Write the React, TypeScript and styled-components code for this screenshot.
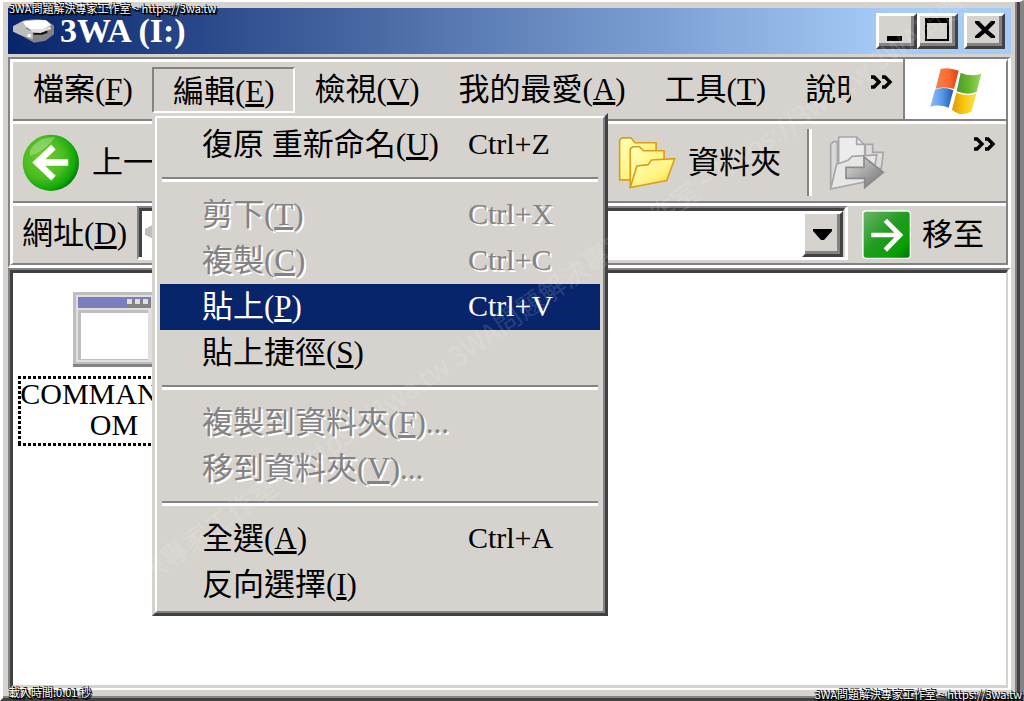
import React from "react";
import styled, { createGlobalStyle, css } from "styled-components";

const face = "#d6d3ce";
const shade = "#848284";
const dark = "#424142";
const navy = "#08246b";
const uiFont = `"Liberation Serif", "Noto Sans CJK TC", serif`;

const GlobalStyle = createGlobalStyle`
  * { box-sizing: border-box; }
  body { margin: 0; background: ${face}; font-family: ${uiFont}; color: #000; }
  button, input { font: inherit; color: inherit; border-radius: 0; margin: 0; }
  ul { list-style: none; margin: 0; padding: 0; }
  svg { display: block; flex: none; }
`;

const raised = css`
  border: solid;
  border-width: 3px;
  border-color: #fff ${dark} ${dark} #fff;
  box-shadow: inset -3px -3px ${shade};
`;

const Window = styled.div`
  position: relative;
  display: flex;
  flex-direction: column;
  min-height: 100vh;
  padding: 6px 9px 8px 5px;
  background: ${face};
  border: solid;
  border-width: 2px 4px 3px 3px;
  border-color: #fff ${shade} ${dark} #fff;
  box-shadow: inset -3px 0 ${dark}, inset -5px -2px ${shade};
`;

const TitleBar = styled.header`
  display: flex;
  align-items: center;
  height: 46px;
  margin-bottom: 3px;
  padding: 0 6px 0 5px;
  background: linear-gradient(90deg, ${navy}, #a5cbf7 88%);
  color: #fff;
`;

const Title = styled.h1`
  flex: 1;
  margin: 0 0 0 6px;
  font-size: 34px;
  line-height: 46px;
  font-weight: 700;
`;

const Caption = styled.button<{ $apart?: boolean }>`
  ${raised}
  display: flex;
  width: 41px;
  height: 36px;
  padding: 0;
  margin-left: ${(p) => (p.$apart ? 6 : 0)}px;
  background: ${face};
`;

const RebarOuter = styled.div`
  border: solid;
  border-width: 2px 3px 3px 2px;
  border-color: ${shade} #fff #fff ${shade};
`;

const RebarInner = styled.div`
  border: solid;
  border-width: 3px 2px 2px 3px;
  border-color: #fff ${shade} ${shade} #fff;
`;

const Band = styled.div<{ $tall?: boolean; $last?: boolean }>`
  display: flex;
  align-items: center;
  height: ${(p) => (p.$tall ? 77 : 57)}px;
  font-size: 31px;
  line-height: 46px;
  white-space: nowrap;
  ${(p) =>
    !p.$last &&
    css`
      box-sizing: content-box;
      border-bottom: 2px solid ${shade};
      box-shadow: 0 3px #fff;
      margin-bottom: 3px;
    `}
`;

const MenuList = styled.ul`
  display: flex;
  flex: 1;
  min-width: 0;
`;

const MenuEntry = styled.li<{ $clip?: boolean }>`
  position: relative;
  ${(p) => p.$clip && css`width: 66px; overflow: hidden;`}
`;

const MenuButton = styled.button<{ $open?: boolean }>`
  height: 46px;
  padding: 0 17px 0 18px;
  border: 2px solid transparent;
  background: none;
  line-height: 42px;
  ${(p) =>
    p.$open &&
    css`
      border-color: ${shade} #fff #fff ${shade};
      padding: 2px 18px 0 19px;
    `}
`;

const More = styled.button`
  align-self: flex-start;
  margin: 12px 10px 0 0;
  padding: 0;
  border: 0;
  background: none;
`;

const Brand = styled.div`
  display: flex;
  align-items: center;
  justify-content: center;
  align-self: stretch;
  width: 103px;
  margin-top: -3px;
  padding-top: 3px;
  border-left: 2px solid ${shade};
  background: #fff;
`;

const PopupOuter = styled.div`
  position: absolute;
  z-index: 5;
  top: 46px;
  left: 0;
  width: 456px;
  border: solid;
  border-width: 3px;
  border-color: ${face} ${dark} ${dark} ${face};
`;

const PopupInner = styled.ul`
  padding: 4px 3px 3px;
  background: ${face};
  border: solid;
  border-width: 2px;
  border-color: #fff ${shade} ${shade} #fff;
`;

const PopupItem = styled.button<{ $active?: boolean }>`
  display: flex;
  width: 100%;
  height: 46px;
  padding: 0 0 0 42px;
  border: 0;
  text-align: left;
  line-height: 46px;
  background: ${(p) => (p.$active ? navy : "transparent")};
  color: ${(p) => (p.$active ? "#fff" : "#000")};
  &:disabled {
    color: ${shade};
    text-shadow: 2px 2px #fff;
  }
`;

const ItemName = styled.span`
  flex: 1;
`;

const Shortcut = styled.span`
  width: 132px;
  font-size: 30px;
  line-height: 44px;
`;

const Rule = styled.li`
  height: 24px;
  padding: 9px 2px 0;
  &::before {
    content: "";
    display: block;
    border-top: 2px solid ${shade};
    border-bottom: 3px solid #fff;
  }
`;

const ToolButton = styled.button<{ $wide?: boolean }>`
  display: flex;
  align-items: center;
  gap: 12px;
  height: 70px;
  padding: 0 0 0 9px;
  border: 0;
  background: none;
  ${(p) => p.$wide && css`width: 596px;`}
`;

const ToolDivider = styled.span`
  width: 5px;
  height: 67px;
  margin: 0 8px 0 26px;
  border-left: 2px solid ${shade};
  border-right: 3px solid #fff;
`;

const Grow = styled.span`
  flex: 1;
`;

const AddressLabel = styled.label`
  padding: 0 10px 2px 9px;
`;

const ComboOuter = styled.div`
  display: flex;
  flex: 1;
  align-self: flex-start;
  height: 54px;
  border: solid;
  border-width: 2px 3px 3px 2px;
  border-color: ${shade} #fff #fff ${shade};
`;

const ComboInner = styled.div`
  display: flex;
  align-items: center;
  flex: 1;
  padding-left: 3px;
  background: #fff;
  border: solid;
  border-width: 3px 2px 0 3px;
  border-color: ${dark} ${face} ${face} ${dark};
`;

const AddressInput = styled.input`
  flex: 1;
  min-width: 0;
  height: 40px;
  padding: 0 8px;
  border: 0;
  outline: 0;
  background: transparent;
`;

const DropButton = styled.button`
  ${raised}
  display: flex;
  align-items: center;
  justify-content: center;
  align-self: stretch;
  width: 41px;
  padding: 0;
  background: ${face};
`;

const GoButton = styled.button`
  display: flex;
  align-items: center;
  gap: 11px;
  height: 57px;
  padding: 0 22px 0 14px;
  border: 0;
  background: none;
`;

const PaneOuter = styled.main`
  display: flex;
  flex: 1;
  border: solid;
  border-width: 2px 3px 2px 2px;
  border-color: ${shade} #fff #fff ${shade};
`;

const PaneInner = styled.div`
  flex: 1;
  padding: 19px 5px;
  background: #fff;
  border: solid;
  border-width: 3px 2px 3px 3px;
  border-color: ${dark} ${face} ${face} ${dark};
`;

const FileTile = styled.figure`
  display: flex;
  flex-direction: column;
  align-items: center;
  width: 192px;
  margin: 0;
`;

const dots = (dir: string) =>
  `repeating-linear-gradient(${dir}, #000 0 3px, transparent 3px 5px)`;

const FileName = styled.figcaption`
  width: 192px;
  margin-top: 9px;
  padding: 2px 0 6px;
  font-size: 30px;
  line-height: 31px;
  text-align: center;
  background: ${dots("90deg")} top / 100% 3px no-repeat,
    ${dots("90deg")} bottom / 100% 3px no-repeat,
    ${dots("180deg")} left / 3px 100% no-repeat,
    ${dots("180deg")} right / 3px 100% no-repeat;
`;

const Stamp = styled.small<{ $corner: "tl" | "bl" | "br" }>`
  position: absolute;
  z-index: 8;
  font-family: "Noto Sans CJK TC", sans-serif;
  font-size: 11px;
  line-height: 14px;
  color: #fff;
  white-space: nowrap;
  text-shadow: 1px 1px #000, -1px 1px #000, 1px -1px #000, 2px 2px #000, 0 1px #000;
  ${(p) => p.$corner === "tl" && css`top: -1px; left: 6px;`}
  ${(p) => p.$corner === "bl" && css`bottom: -1px; left: 6px;`}
  ${(p) => p.$corner === "br" && css`bottom: -3px; right: -2px;`}
`;

const Overlay = styled.div`
  position: absolute;
  inset: 0;
  z-index: 9;
  overflow: hidden;
  pointer-events: none;
`;

const Diagonal = styled.div`
  position: absolute;
  left: 26px;
  top: 637px;
  transform: rotate(-35deg);
  transform-origin: 0 50%;
  font-family: "Noto Sans CJK TC", sans-serif;
  font-size: 27px;
  line-height: 30px;
  color: rgba(255, 255, 255, 0.15);
  white-space: pre;
`;

const Drive = ({ width }: { width: number }) => (
  <svg width={width} viewBox="0 0 124 72" aria-hidden="true">
    <path d="M0 22 30 6Q60-4 100 4L124 20V46L98 66 64 72 20 48 0 38Z" fill="#848284" />
    <path d="M0 22 30 6 44 2 40 30 60 38V62L20 48 0 38Z" fill="#bdbebd" />
    <path d="M30 8Q60 0 100 4L116 18 92 30 50 30 38 22Z" fill="#fff" />
    <path d="M50 30 92 30 112 22 116 30 84 42 60 40Z" fill="#dedfde" />
    <path d="M62 42H84L104 35V42L88 48H62Z" fill="#111" />
    <path d="M44 46h10v8H44Z" fill="#fff" />
  </svg>
);

const Chevrons = () => (
  <svg width="23" height="16" viewBox="0 0 23 16" aria-hidden="true">
    <path d="M1 3H4L9 8 4 13H1M12 3H15L20 8 15 13H12" fill="none" stroke="#000" strokeWidth="3.4" />
  </svg>
);

const Flag = () => (
  <svg width="52" height="48" viewBox="694 197 156 144" aria-hidden="true">
    <defs>
      <linearGradient id="fr"><stop offset="0" stopColor="#f08050" /><stop offset=".55" stopColor="#ff6a2c" /><stop offset="1" stopColor="#d8401c" /></linearGradient>
      <linearGradient id="fg"><stop offset="0" stopColor="#4c9a30" /><stop offset=".5" stopColor="#68b82c" /><stop offset="1" stopColor="#9ad860" /></linearGradient>
      <linearGradient id="fb"><stop offset="0" stopColor="#8cc0f8" /><stop offset=".5" stopColor="#5a98e8" /><stop offset="1" stopColor="#2458a8" /></linearGradient>
      <linearGradient id="fy"><stop offset="0" stopColor="#e09808" /><stop offset=".5" stopColor="#f8c810" /><stop offset="1" stopColor="#fce050" /></linearGradient>
    </defs>
    <path d="M726 203Q750 196 780 208L766 263Q742 254 711 262Z" fill="url(#fr)" />
    <path d="M786 214Q816 228 848 217L834 271Q808 284 774 270Z" fill="url(#fg)" />
    <path d="M709 265Q736 254 764 267L750 319Q724 308 695 316Z" fill="url(#fb)" />
    <path d="M773 274Q802 286 833 277L818 331Q786 348 760 325Z" fill="url(#fy)" />
  </svg>
);

const Back = () => (
  <svg width="58" height="58" viewBox="64 40 177 177" aria-hidden="true">
    <defs>
      <radialGradient id="bk" cx=".38" cy=".42" r=".65">
        <stop offset="0" stopColor="#74cc30" /><stop offset=".55" stopColor="#4cbc20" />
        <stop offset=".85" stopColor="#10a808" /><stop offset="1" stopColor="#087010" />
      </radialGradient>
    </defs>
    <circle cx="152" cy="128" r="86" fill="url(#bk)" />
    <path d="M88 90Q112 48 165 50 140 88 88 108Z" fill="#fff" opacity=".28" />
    <path d="M205 127H112M160 80 110 127 160 175" fill="none" stroke="#fff" strokeWidth="20" />
  </svg>
);

const Folders = () => (
  <svg width="58" height="54" viewBox="85 54 175 162" aria-hidden="true">
    <defs>
      <linearGradient id="fo" x1="0" y1="0" x2="1" y2="1">
        <stop offset="0" stopColor="#ffffc0" /><stop offset=".6" stopColor="#fff37c" /><stop offset="1" stopColor="#f8c840" />
      </linearGradient>
    </defs>
    <g fill="url(#fo)" stroke="#d8a018" strokeWidth="5">
      <path d="M90 186V66L98 59H124L136 74H200V120L150 186Z" />
      <path d="M122 208V92L130 86H150L162 98H224V130L190 190Z" />
      <path d="M122 209 142 144 176 140 186 126 256 122 232 188Z" />
    </g>
  </svg>
);

const MoveTo = () => (
  <svg width="56" height="56" viewBox="719 40 168 168" aria-hidden="true">
    <defs>
      <linearGradient id="mv" x1="0" y1="0" x2="1" y2="1">
        <stop offset="0" stopColor="#dededc" /><stop offset="1" stopColor="#707070" />
      </linearGradient>
    </defs>
    <g stroke="#a8a6a8" strokeWidth="5">
      <path d="M724 200V68L732 60H744V130Z" fill="#d8d8d6" />
      <path d="M748 140V46H802L826 70V140Z" fill="#ececec" />
      <path d="M802 46V68H826" fill="none" />
      <path d="M828 68H850V92H882L876 140H828Z" fill="#dcdcda" />
      <path d="M724 202 742 128 776 116 788 104 862 100 850 176Z" fill="#e6e6e4" />
      <path d="M770 137H824V106L882 152 826 198V170H770Z" fill="url(#mv)" stroke="#8c8a8c" />
    </g>
  </svg>
);

const Go = () => (
  <svg width="49" height="49" viewBox="818 268 147 147" aria-hidden="true">
    <defs>
      <linearGradient id="go" x1="0" y1="0" x2="1" y2="1">
        <stop offset="0" stopColor="#6cb468" /><stop offset=".45" stopColor="#249c24" />
        <stop offset=".8" stopColor="#08a000" /><stop offset="1" stopColor="#087010" />
      </linearGradient>
    </defs>
    <rect x="818" y="268" width="147" height="147" rx="12" fill="#f2f6f0" />
    <rect x="823" y="273" width="138" height="138" rx="8" fill="url(#go)" />
    <path d="M846 343H934M888 299 932 343 888 388" fill="none" stroke="#fff" strokeWidth="14" />
  </svg>
);

const ProgramIcon = () => (
  <svg width="82" height="75" viewBox="0 0 82 75" aria-hidden="true">
    <path d="M0 0H82V75H0Z" fill="#848284" />
    <path d="M0 0H80V72H0Z" fill="#bdbebd" />
    <path d="M3 3H79V70H3Z" fill="#dedfde" />
    <path d="M5 5H78V16H5Z" fill="#7b7dbd" />
    <path d="M54 7H78V16H54Z" fill={shade} />
    <path d="M54 7h5v5h-5ZM62 7h5v5h-5ZM70 7h5v5h-5Z" fill="#dedfde" />
    <path d="M5 18H75V68H5Z" fill="#bdbebd" />
    <path d="M8 21H75V67H8Z" fill="#fff" />
  </svg>
);

type Entry = { name: string; hot: string; tail?: string; keys?: string; off?: boolean; active?: boolean };

const groups: Entry[][] = [
  [{ name: "復原 重新命名", hot: "U", keys: "Ctrl+Z" }],
  [
    { name: "剪下", hot: "T", keys: "Ctrl+X", off: true },
    { name: "複製", hot: "C", keys: "Ctrl+C", off: true },
    { name: "貼上", hot: "P", keys: "Ctrl+V", active: true },
    { name: "貼上捷徑", hot: "S" },
  ],
  [
    { name: "複製到資料夾", hot: "F", tail: "...", off: true },
    { name: "移到資料夾", hot: "V", tail: "...", off: true },
  ],
  [
    { name: "全選", hot: "A", keys: "Ctrl+A" },
    { name: "反向選擇", hot: "I" },
  ],
];

const menus = [
  { name: "檔案", hot: "F" },
  { name: "編輯", hot: "E", open: true },
  { name: "檢視", hot: "V" },
  { name: "我的最愛", hot: "A" },
  { name: "工具", hot: "T" },
  { name: "說明", clip: true },
];

const Hot = ({ name, hot, tail }: { name: string; hot?: string; tail?: string }) => (
  <>{name}{hot && <>(<u>{hot}</u>)</>}{tail}</>
);

const EditMenu = () => (
  <PopupOuter>
    <PopupInner>
      {groups.map((group, g) => (
        <React.Fragment key={g}>
          {g > 0 && <Rule role="separator" />}
          {group.map((e) => (
            <li key={e.name}>
              <PopupItem type="button" disabled={e.off} $active={e.active}>
                <ItemName><Hot name={e.name} hot={e.hot} tail={e.tail} /></ItemName>
                {e.keys && <Shortcut>{e.keys}</Shortcut>}
              </PopupItem>
            </li>
          ))}
        </React.Fragment>
      ))}
    </PopupInner>
  </PopupOuter>
);

const credit = "3WA問題解決專家工作室 ~ https://3wa.tw";

export default function App() {
  return (
    <>
      <GlobalStyle />
      <Window>
        <TitleBar>
          <Drive width={41} />
          <Title>3WA (I:)</Title>
          <Caption type="button" aria-label="最小化">
            <svg width="35" height="30" viewBox="0 0 35 30"><path d="M8 20H23V25H8Z" /></svg>
          </Caption>
          <Caption type="button" aria-label="最大化">
            <svg width="35" height="30" viewBox="0 0 35 30"><path d="M5 2H29V25H5ZM7 7V23H27V7Z" fillRule="evenodd" /></svg>
          </Caption>
          <Caption type="button" aria-label="關閉" $apart>
            <svg width="35" height="30" viewBox="0 0 35 30"><path d="M8 5H12L18 11 24 5H28V7L21 14 28 20V22H24L18 17 12 22H8V20L15 14 8 7Z" /></svg>
          </Caption>
        </TitleBar>

        <RebarOuter>
          <RebarInner>
            <Band as="nav">
              <MenuList>
                {menus.map((m) => (
                  <MenuEntry key={m.name} $clip={m.clip}>
                    <MenuButton type="button" $open={m.open}>
                      <Hot name={m.name} hot={m.hot} />
                    </MenuButton>
                    {m.open && <EditMenu />}
                  </MenuEntry>
                ))}
              </MenuList>
              <More type="button" aria-label="更多功能表"><Chevrons /></More>
              <Brand><Flag /></Brand>
            </Band>

            <Band $tall>
              <ToolButton type="button" $wide><Back />上一頁</ToolButton>
              <ToolButton type="button"><Folders />資料夾</ToolButton>
              <ToolDivider />
              <ToolButton type="button" aria-label="移至資料夾"><MoveTo /></ToolButton>
              <Grow />
              <More type="button" aria-label="更多按鈕"><Chevrons /></More>
            </Band>

            <Band $last>
              <AddressLabel htmlFor="address"><Hot name="網址" hot="D" /></AddressLabel>
              <ComboOuter>
                <ComboInner>
                  <Drive width={41} />
                  <AddressInput id="address" type="text" />
                  <DropButton type="button" aria-label="展開網址清單">
                    <svg width="19" height="11" viewBox="0 0 19 11"><path d="M0 0H19V2L11 11H8L0 2Z" /></svg>
                  </DropButton>
                </ComboInner>
              </ComboOuter>
              <GoButton type="button"><Go />移至</GoButton>
            </Band>
          </RebarInner>
        </RebarOuter>

        <PaneOuter>
          <PaneInner>
            <FileTile>
              <ProgramIcon />
              <FileName>COMMAND.C<br />OM</FileName>
            </FileTile>
          </PaneInner>
        </PaneOuter>

        <Overlay aria-hidden="true">
          <Diagonal>{`${credit} ${credit} 3WA問題`}</Diagonal>
        </Overlay>
        <Stamp $corner="tl">{credit}</Stamp>
        <Stamp $corner="bl">載入時間:0.01 秒</Stamp>
        <Stamp $corner="br">{credit}</Stamp>
      </Window>
    </>
  );
}
